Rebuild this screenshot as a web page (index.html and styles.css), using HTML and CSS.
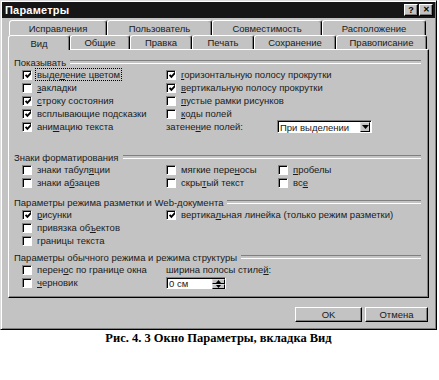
FILE: index.html
```html
<!DOCTYPE html>
<html lang="ru">
<head>
<meta charset="utf-8">
<title>Параметры</title>
<link rel="stylesheet" href="styles.css">
</head>
<body>
<div class="dialog">
  <div class="titlebar">
    <span class="title">Параметры</span>
    <div class="tbtns"><span class="tbtn">?</span><span class="tbtn x">✕</span></div>
  </div>
  <div class="tabs">
    <div class="tabrow back">
      <div class="tab w98">Исправления</div>
      <div class="tab w105">Пользователь</div>
      <div class="tab w110">Совместимость</div>
      <div class="tab w104">Расположение</div>
    </div>
    <div class="tabrow front">
      <div class="tab active w62">Вид</div>
      <div class="tab w60">Общие</div>
      <div class="tab w62">Правка</div>
      <div class="tab w62">Печать</div>
      <div class="tab w82">Сохранение</div>
      <div class="tab w91">Правописание</div>
    </div>
  </div>
  <div class="panel">
    <div class="group g1">
      <div class="group-head">Показывать</div>
      <div class="rows">
        <div class="cb"><span class="box on"></span><span class="focus">выде<u>л</u>ение цветом</span></div>
        <div class="cb"><span class="box on"></span><span><u>г</u>оризонтальную полосу прокрутки</span></div>
        <div class="cb"><span class="box"></span><span><u>з</u>акладки</span></div>
        <div class="cb"><span class="box on"></span><span><u>в</u>ертикальную полосу прокрутки</span></div>
        <div class="cb"><span class="box on"></span><span><u>с</u>троку состояния</span></div>
        <div class="cb"><span class="box"></span><span><u>п</u>устые рамки рисунков</span></div>
        <div class="cb"><span class="box on"></span><span>всплывающие подсказки</span></div>
        <div class="cb"><span class="box"></span><span><u>к</u>оды полей</span></div>
        <div class="cb"><span class="box on"></span><span>ани<u>м</u>ацию текста</span></div>
        <div class="shade">
          <span class="shade-label">затене<u>н</u>ие полей:</span>
          <div class="select"><span class="sel-text">При выделении</span><span class="sel-btn"><svg width="7" height="4" viewBox="0 0 7 4"><path d="M0 0H7L3.5 4Z" fill="#000"/></svg></span></div>
        </div>
      </div>
    </div>
    <div class="group g2">
      <div class="group-head">Знаки форматирования</div>
      <div class="rows three">
        <div class="cb"><span class="box"></span><span>знаки табул<u>я</u>ции</span></div>
        <div class="cb"><span class="box"></span><span>мягкие пере<u>н</u>осы</span></div>
        <div class="cb"><span class="box"></span><span><u>п</u>робелы</span></div>
        <div class="cb"><span class="box"></span><span>знаки а<u>б</u>зацев</span></div>
        <div class="cb"><span class="box"></span><span>скры<u>т</u>ый текст</span></div>
        <div class="cb"><span class="box"></span><span>вс<u>е</u></span></div>
      </div>
    </div>
    <div class="group g3">
      <div class="group-head">Параметры режима разметки и Web-документа</div>
      <div class="rows">
        <div class="cb"><span class="box on"></span><span><u>р</u>исунки</span></div>
        <div class="cb wide"><span class="box on"></span><span>вертика<u>л</u>ьная линейка (только режим разметки)</span></div>
        <div class="cb"><span class="box"></span><span>привязка об<u>ъ</u>ектов</span></div>
        <div></div>
        <div class="cb"><span class="box"></span><span>границы текста</span></div>
      </div>
    </div>
    <div class="group g4">
      <div class="group-head">Параметры обычного режима и режима структуры</div>
      <div class="rows">
        <div class="cb"><span class="box"></span><span>перен<u>о</u>с по границе окна</span></div>
        <div class="plain">ширина полосы стиле<u>й</u>:</div>
        <div class="cb"><span class="box"></span><span><u>ч</u>ерновик</span></div>
        <div class="spin-cell">
          <div class="spin"><span class="spin-text">0 см</span><span class="spin-btns"><span class="sb"><svg width="5" height="3" viewBox="0 0 5 3"><path d="M0 3H5L2.5 0Z" fill="#000"/></svg></span><span class="sb"><svg width="5" height="3" viewBox="0 0 5 3"><path d="M0 0H5L2.5 3Z" fill="#000"/></svg></span></span></div>
        </div>
      </div>
    </div>
  </div>
  <div class="footer">
    <button class="btn ok">OK</button>
    <button class="btn cancel">Отмена</button>
  </div>
</div>
<p class="caption">Рис. 4. 3 Окно Параметры, вкладка Вид</p>
</body>
</html>
```

FILE: styles.css
```css
* { box-sizing: border-box; }
body {
  margin: 0;
  background: #fff;
  font-family: "Liberation Sans", Arial, sans-serif;
  font-size: 9.5px;
  color: #1a1a1a;
}
u { text-decoration: underline; text-underline-offset: 1px; }
.dialog {
  width: 437px;
  height: 330px;
  background: #c3c3c3;
  border: 1px solid;
  border-color: #dcdcdc #000 #000 #dcdcdc;
  box-shadow: inset 1px 1px #fff, inset -1px -1px #808080;
  padding: 1px;
  display: flex;
  flex-direction: column;
}
.titlebar {
  height: 16px;
  flex: none;
  background: #161616;
  display: flex;
  align-items: center;
  justify-content: space-between;
  padding: 0 2px 0 3px;
}
.title { color: #fff; font-weight: bold; font-size: 11px; letter-spacing: 0.2px; }
.tbtns { display: flex; gap: 1px; }
.tbtn {
  width: 14px;
  height: 12px;
  background: #c3c3c3;
  border: 1px solid;
  border-color: #fff #000 #000 #fff;
  box-shadow: inset -1px -1px #808080;
  font-weight: bold;
  font-size: 9px;
  color: #000;
  display: flex;
  align-items: center;
  justify-content: center;
  line-height: 1;
}
.tbtn.x { font-size: 8px; }
.tabs { margin-top: 2px; flex: none; }
.tabrow { display: flex; align-items: flex-start; }
.back { margin-left: 7px; height: 15px; }
.front { margin-left: 6px; height: 14px; }
.tab {
  height: 100%;
  border: 1px solid;
  border-bottom: none;
  border-color: #fff #000 transparent #fff;
  border-radius: 3px 3px 0 0;
  box-shadow: inset -1px 0 #808080;
  display: flex;
  align-items: center;
  justify-content: center;
  background: #c3c3c3;
}
.tab.active {
  height: 15px;
  position: relative;
  z-index: 1;
}
.w98 { width: 98px; } .w105 { width: 105px; } .w110 { width: 110px; } .w104 { width: 104px; }
.w62 { width: 62px; } .w60 { width: 60px; } .w82 { width: 82px; } .w91 { width: 91px; }
.panel {
  margin-left: 6px;
  width: 421px;
  height: 249px;
  flex: none;
  border: 1px solid;
  border-color: #fff #000 #000 #fff;
  box-shadow: inset -1px -1px #808080;
  padding-top: 6px;
}
.group-head {
  display: flex;
  align-items: center;
  height: 12px;
  margin-left: 5px;
  margin-right: 7px;
  white-space: nowrap;
}
.group-head::after {
  content: "";
  flex: 1;
  height: 2px;
  border-top: 1px solid #808080;
  border-bottom: 1px solid #fff;
  margin-left: 4px;
}
.g2 { margin-top: 18px; }
.g3 { margin-top: 7px; }
.g4 { margin-top: 4px; }
.rows {
  display: grid;
  grid-template-columns: 144px 1fr;
  grid-auto-rows: 13px;
  margin-left: 13px;
}
.rows.three { grid-template-columns: 144px 112px 1fr; }
.cb { display: flex; align-items: center; gap: 5px; white-space: nowrap; }
.cb.wide { grid-column: 2 / -1; }
.box {
  flex: none;
  width: 10px;
  height: 10px;
  background: #fff;
  border: 1px solid;
  border-color: #808080 #fff #fff #808080;
  box-shadow: inset 1px 1px #000;
}
.box.on {
  background: #fff url("data:image/svg+xml,%3Csvg xmlns='http://www.w3.org/2000/svg' width='9' height='9' viewBox='0 0 9 9'%3E%3Cpath d='M1.6 3.8L3.4 5.8L7.6 1.3' stroke='%23000' stroke-width='1.9' fill='none'/%3E%3C/svg%3E") 1px 0 / 9px 9px no-repeat;
}
.focus { outline: 1px dotted #000; outline-offset: 0; padding: 0 1px; margin-left: -1px; }
.shade { display: flex; align-items: center; }
.shade-label { width: 111px; }
.select {
  width: 95px;
  height: 13px;
  background: #fff;
  border: 1px solid;
  border-color: #808080 #fff #fff #808080;
  box-shadow: inset 1px 1px #000;
  display: flex;
  align-items: stretch;
  padding: 1px 1px 0 2px;
}
.sel-text { flex: 1; display: flex; align-items: center; }
.sel-btn {
  width: 10px;
  background: #c3c3c3;
  border: 1px solid;
  border-color: #dcdcdc #000 #000 #dcdcdc;
  display: flex;
  align-items: center;
  justify-content: center;
}
.plain { display: flex; align-items: center; white-space: nowrap; }
.spin-cell { display: flex; align-items: center; }
.spin {
  width: 60px;
  height: 12px;
  background: #fff;
  border: 1px solid;
  border-color: #808080 #fff #fff #808080;
  box-shadow: inset 1px 1px #000;
  display: flex;
  padding: 1px 0 0 2px;
}
.spin-text { flex: 1; display: flex; align-items: center; }
.spin-btns { width: 13px; display: flex; flex-direction: column; }
.sb {
  flex: 1;
  background: #c3c3c3;
  border: 1px solid;
  border-color: #dcdcdc #000 #000 #dcdcdc;
  display: flex;
  align-items: center;
  justify-content: center;
}
.footer {
  display: flex;
  justify-content: flex-end;
  gap: 3px;
  margin-top: 9px;
  padding-right: 7px;
}
.btn {
  height: 15px;
  padding: 0;
  font: inherit;
  color: #1a1a1a;
  background: #c3c3c3;
  border: 1px solid;
  border-color: #fff #000 #000 #fff;
  box-shadow: inset -1px -1px #808080;
}
.ok { width: 67px; }
.cancel { width: 63px; }
.caption {
  margin: 1px 0 0;
  width: 437px;
  text-align: center;
  font-family: "Liberation Serif", "Times New Roman", serif;
  font-weight: bold;
  font-size: 12.5px;
  line-height: 14px;
  color: #000;
}
```
